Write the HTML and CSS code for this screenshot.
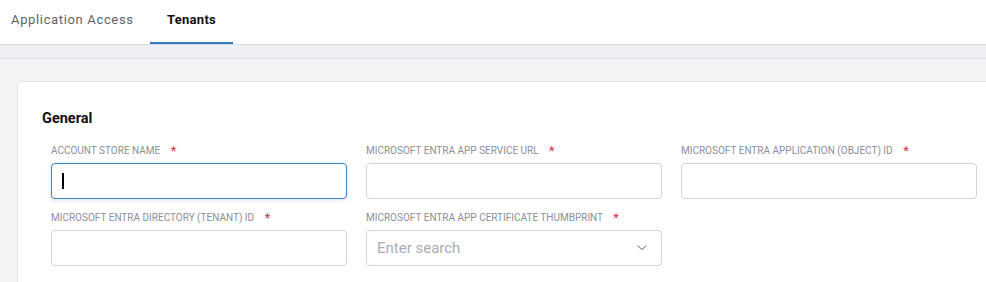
FILE: index.html
```html
<!DOCTYPE html>
<html>
<head>
<meta charset="utf-8">
<link rel="stylesheet" href="styles.css">
</head>
<body>
<nav class="tabs">
  <div class="tab tab-first">Application Access</div>
  <div class="tab tab-active">Tenants</div>
</nav>
<div class="band"></div>
<main class="main">
  <section class="card">
    <h2 class="section-title">General</h2>
    <div class="form-grid">
      <div class="field">
        <label class="label">Account Store Name <span class="req">*</span></label>
        <div class="control focused"><span class="caret"></span></div>
      </div>
      <div class="field">
        <label class="label">Microsoft Entra App Service URL <span class="req">*</span></label>
        <div class="control"></div>
      </div>
      <div class="field">
        <label class="label">Microsoft Entra Application (Object) ID <span class="req">*</span></label>
        <div class="control"></div>
      </div>
      <div class="field">
        <label class="label">Microsoft Entra Directory (Tenant) ID <span class="req">*</span></label>
        <div class="control"></div>
      </div>
      <div class="field">
        <label class="label">Microsoft Entra App Certificate Thumbprint <span class="req">*</span></label>
        <div class="control select">
          <span class="placeholder">Enter search</span>
          <svg class="chevron" width="10" height="6" viewBox="0 0 10 6"><path d="M1 1l4 3.5L9 1" fill="none" stroke="#9aa0a8" stroke-width="1.3" stroke-linecap="round" stroke-linejoin="round"/></svg>
        </div>
      </div>
    </div>
  </section>
</main>
</body>
</html>
```
FILE: styles.css
```css
* { box-sizing: border-box; }
html, body { margin: 0; padding: 0; }
body {
  background: #f3f4f6;
  font-family: Roboto, "Liberation Sans", sans-serif;
  height: 282px;
  overflow: hidden;
}
.tabs {
  display: flex;
  height: 45px;
  background: #fff;
  border-bottom: 1px solid #d9dbdf;
}
.tab {
  display: flex;
  align-items: center;
  font-size: 13px;
  color: #5f6368;
  letter-spacing: 0.65px;
  height: 44px;
  padding-bottom: 5px;
}
.tab-first {
  width: 150px;
  padding-left: 11px;
}
.tab-active {
  width: 83px;
  justify-content: center;
  font-weight: 700;
  color: #111;
  letter-spacing: 0.3px;
  border-bottom: 2px solid #2f7bc2;
  padding-bottom: 3px;
}
.band {
  height: 14px;
  background: #eeeff2;
  border-bottom: 1px solid #dcdcea;
}
.main {
  padding: 22px 0 0 17px;
}
.card {
  background: #fff;
  border: 1px solid #e1e3e7;
  border-right: none;
  border-radius: 5px 0 0 0;
  padding: 28px 0 24px 24px;
}
.section-title {
  margin: 0 0 15px;
  font-size: 14.5px;
  font-weight: 700;
  color: #111;
  line-height: 18px;
}
.form-grid {
  display: grid;
  grid-template-columns: repeat(3, 296px);
  column-gap: 19px;
  row-gap: 11px;
  padding-left: 9px;
}
.field {
  display: flex;
  flex-direction: column;
}
.label {
  font-size: 10px;
  line-height: 14px;
  color: #8b909a;
  text-transform: uppercase;
  margin-bottom: 5px;
  white-space: nowrap;
}
.req {
  color: #e0303f;
  font-size: 13px;
  margin-left: 8px;
  position: relative;
  top: 1px;
}
.control {
  height: 36px;
  border: 1px solid #d2d5da;
  border-radius: 4px;
  background: #fff;
  display: flex;
  align-items: center;
}
.control.focused {
  border-color: #3a84c8;
  box-shadow: 0 1px 4px rgba(58, 132, 200, 0.25);
}
.caret {
  display: block;
  width: 1.5px;
  height: 16px;
  background: #000;
  margin-left: 10px;
}
.select {
  justify-content: space-between;
  padding: 0 14px 0 10px;
}
.placeholder {
  font-size: 15px;
  color: #a9aeb5;
}
.chevron {
  display: block;
}
```
